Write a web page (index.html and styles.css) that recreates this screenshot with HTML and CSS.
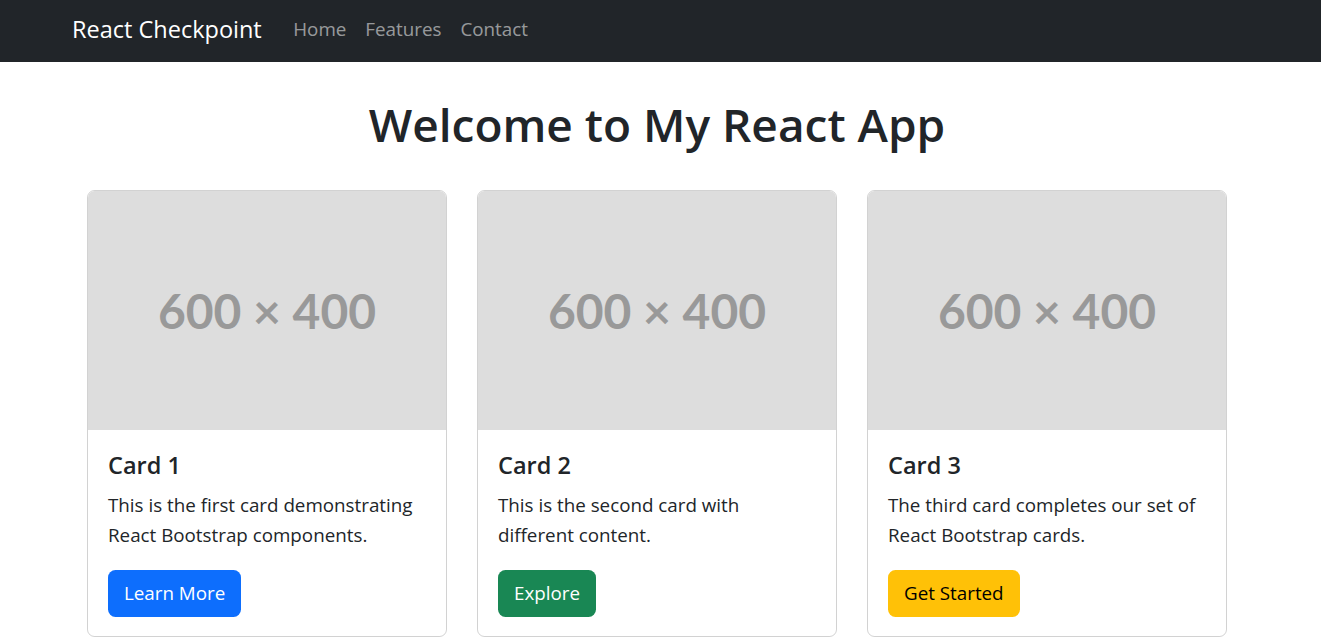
FILE: index.html
```html
<!DOCTYPE html>
<html lang="en">
<head>
<meta charset="utf-8">
<title>React Checkpoint</title>
<link rel="stylesheet" href="styles.css">
</head>
<body>
<nav class="navbar">
  <div class="nav-inner">
    <a class="brand" href="#">React Checkpoint</a>
    <div class="nav-links">
      <a class="nav-link" href="#">Home</a>
      <a class="nav-link" href="#">Features</a>
      <a class="nav-link" href="#">Contact</a>
    </div>
  </div>
</nav>
<main class="container">
  <h1 class="title">Welcome to My React App</h1>
  <div class="cards">
    <div class="card">
      <div class="card-img"><span>600 × 400</span></div>
      <div class="card-body">
        <h5 class="card-title">Card 1</h5>
        <p class="card-text">This is the first card demonstrating React Bootstrap components.</p>
        <a class="btn btn-primary" href="#">Learn More</a>
      </div>
    </div>
    <div class="card">
      <div class="card-img"><span>600 × 400</span></div>
      <div class="card-body">
        <h5 class="card-title">Card 2</h5>
        <p class="card-text">This is the second card with different content.</p>
        <a class="btn btn-success" href="#">Explore</a>
      </div>
    </div>
    <div class="card">
      <div class="card-img"><span>600 × 400</span></div>
      <div class="card-body">
        <h5 class="card-title">Card 3</h5>
        <p class="card-text">The third card completes our set of React Bootstrap cards.</p>
        <a class="btn btn-warning" href="#">Get Started</a>
      </div>
    </div>
  </div>
</main>
</body>
</html>
```
FILE: styles.css
```css
* { box-sizing: border-box; }
html, body { margin: 0; padding: 0; }
body {
  font-family: "Open Sans", "Noto Sans", "Liberation Sans", sans-serif;
  font-size: 18.8px;
  line-height: 30px;
  color: #212529;
  background: #fff;
}
a { text-decoration: none; }

.navbar {
  background: #212529;
  height: 62px;
  display: flex;
  align-items: center;
}
.nav-inner {
  margin-left: 72px;
  margin-top: -4px;
  display: flex;
  align-items: center;
}
.brand {
  color: #fff;
  font-size: 23.5px;
  margin-right: 22px;
  line-height: 30px;
}
.nav-links { display: flex; }
.nav-link {
  color: rgba(255,255,255,0.55);
  padding: 0 9.5px;
  font-size: 18.8px;
}

.container {
  width: 1170px;
  margin-left: 72px;
}
.title {
  text-align: center;
  font-size: 46px;
  font-weight: 600;
  line-height: 60px;
  margin: 32px 0 36px;
}
.cards {
  display: grid;
  grid-template-columns: repeat(3, 1fr);
  gap: 30px;
  padding: 0 15px;
}
.card {
  border: 1px solid rgba(0,0,0,0.175);
  border-radius: 7.5px;
  overflow: hidden;
}
.card-img {
  height: 239px;
  background: #dddddd;
  display: flex;
  align-items: center;
  justify-content: center;
}
.card-img span {
  font-family: Lato, "Open Sans", sans-serif;
  font-weight: 700;
  font-size: 48px;
  color: #999999;
  line-height: 1;
}
.card-body {
  padding: 20px 20px 19px;
}
.card-title {
  margin: 0 0 10px;
  font-size: 23.5px;
  font-weight: 600;
  line-height: 30px;
}
.card-text {
  margin: 0 0 20px;
}
.btn {
  display: inline-block;
  padding: 8px 15px;
  border-radius: 7.5px;
  line-height: 29px;
  font-size: 18.8px;
  border: 1px solid transparent;
}
.btn-primary { background: #0d6efd; color: #fff; }
.btn-success { background: #198754; color: #fff; }
.btn-warning { background: #ffc107; color: #000; }
```
